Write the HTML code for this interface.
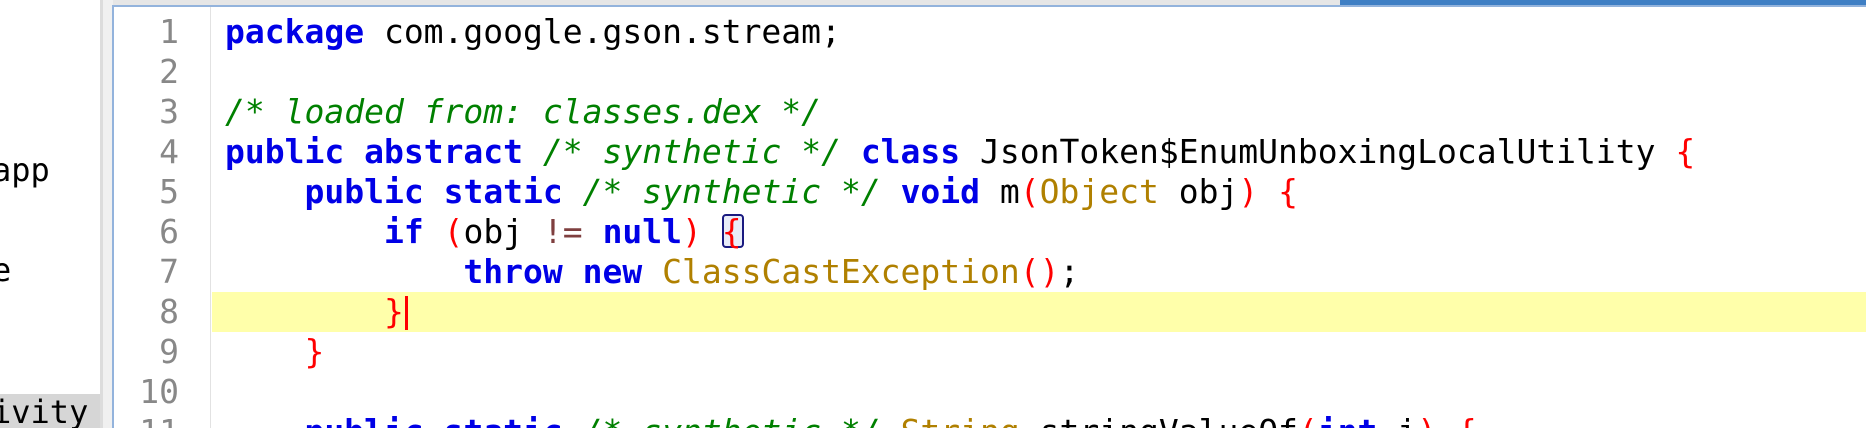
<!DOCTYPE html>
<html><head><meta charset="utf-8"><style>
html,body{margin:0;padding:0;width:1866px;height:428px;overflow:hidden;background:#fff;position:relative}
.abs{position:absolute}
.mono{font-family:"DejaVu Sans Mono","Liberation Mono",monospace;font-size:33px;line-height:40px;white-space:pre}
.k{color:#0000e6;font-weight:bold}
.c{color:#008000;font-style:italic}
.t{color:#b08000}
.p{color:#f00}
.o{color:#7f3f3f}
.ln{color:#888;text-align:right;width:66px}
</style></head><body>
<div class="abs" style="left:0;top:0;width:100px;height:394px;background:#fff;overflow:hidden">
<div class="mono" style="position:absolute;left:-8px;top:150px;font-size:32px;color:#000">app</div>
<div class="mono" style="position:absolute;left:-8px;top:250px;font-size:32px;color:#000">e</div>
</div>
<div class="abs" style="left:0;top:394px;width:100px;height:34px;background:#d6d6d6;overflow:hidden"><div class="mono" style="position:absolute;left:-8px;top:-2px;font-size:32px;color:#000">ivity</div></div>
<div class="abs" style="left:100px;top:0;width:3px;height:428px;background:#dcdcdc"></div>
<div class="abs" style="left:103px;top:0;width:10px;height:428px;background:#f0f0f0"></div>
<div class="abs" style="left:113px;top:0;width:1753px;height:5px;background:#e6e6e6"></div>
<div class="abs" style="left:1340px;top:0;width:526px;height:6px;background:#3f7fc4"></div>
<div class="abs" style="left:112px;top:5px;width:1754px;height:2px;background:#93b3dc"></div>
<div class="abs" style="left:112px;top:5px;width:2px;height:423px;background:#93b3dc"></div>
<div class="abs" style="left:210px;top:7px;width:1px;height:421px;background:#e2e2e2"></div>
<div class="abs" style="left:212px;top:292px;width:1654px;height:40px;background:#ffffaa"></div>
<div class="abs" style="left:722px;top:214px;width:22px;height:34px;border:2px solid #1a1a80;border-radius:4px;background:#e8ecf8;box-sizing:border-box"></div>
<div class="abs" style="left:405px;top:296px;width:3px;height:34px;background:#f00"></div>
<div class="abs mono ln" style="left:113px;top:12px">1
2
3
4
5
6
7
8
9
10
11</div>
<div class="abs mono" style="left:225px;top:12px"><span class="k">package</span> com.google.gson.stream;

<span class="c">/* loaded from: classes.dex */</span>
<span class="k">public</span> <span class="k">abstract</span> <span class="c">/* synthetic */</span> <span class="k">class</span> JsonToken$EnumUnboxingLocalUtility <span class="p">{</span>
    <span class="k">public</span> <span class="k">static</span> <span class="c">/* synthetic */</span> <span class="k">void</span> m<span class="p">(</span><span class="t">Object</span> obj<span class="p">)</span> <span class="p">{</span>
        <span class="k">if</span> <span class="p">(</span>obj <span class="o">!=</span> <span class="k">null</span><span class="p">)</span> <span class="p">{</span>
            <span class="k">throw</span> <span class="k">new</span> <span class="t">ClassCastException</span><span class="p">()</span>;
        <span class="p">}</span>
    <span class="p">}</span>

    <span class="k">public</span> <span class="k">static</span> <span class="c">/* synthetic */</span> <span class="t">String</span> stringValueOf<span class="p">(</span><span class="k">int</span> i<span class="p">)</span> <span class="p">{</span></div>
</body></html>
